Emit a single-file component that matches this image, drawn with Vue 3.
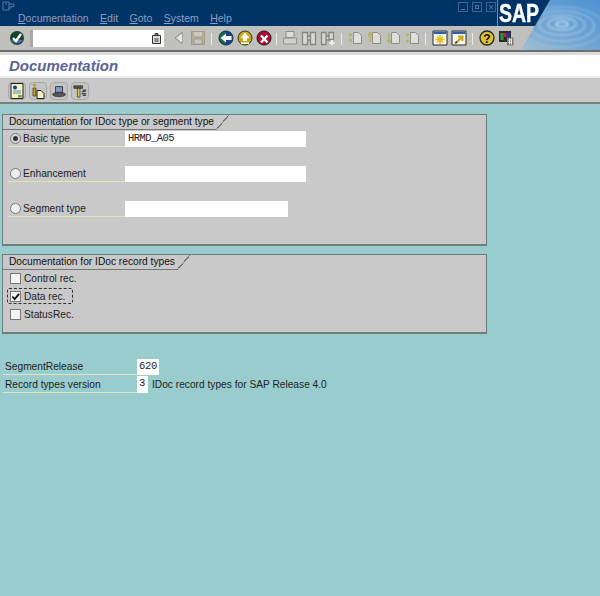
<template>
  <div class="screen">
    <!-- window title + menu -->
    <div class="menubar">
      <svg class="win-icon" width="13" height="11" viewBox="0 0 13 11"><path d="M1 1h6v8H1zM7 3h5v2.500H9V7H7M3 3h2" fill="none" stroke="#5a78a6" /></svg>
      <div class="win-btns">
        <span class="win-btn"><i class="mini-min"></i></span>
        <span class="win-btn"><i class="mini-max"></i></span>
        <span class="win-btn close">×</span>
      </div>
      <nav class="menu">
        <span v-for="m in menus" :key="m" class="menu-item"><u>{{ m[0] }}</u>{{ m.slice(1) }}</span>
      </nav>
    </div>

    <!-- system toolbar -->
    <div class="systoolbar">
      <button class="tb-btn first">
        <svg viewBox="0 0 16 16"><circle cx="8" cy="8" r="7" fill="#17432f" /><path d="M2 10a7 7 0 0 0 12 0z" fill="#4a6ea8" /><path d="M4 8l3 3 5-7" fill="none" stroke="#fff" stroke-width="2.400" /></svg>
      </button>
      <div class="cmd">
        <svg class="cmd-icon" viewBox="0 0 9 11"><path d="M.5 2.500h8v8h-8z" fill="#ddd" stroke="#333" /><path d="M3 .5h3v2H3zM2.500 6h4M2.500 8h4" fill="#888" stroke="#333" /></svg>
      </div>
      <button class="tb-btn">
        <svg viewBox="0 0 16 16"><path d="M11 2.500v11L4 8z" fill="#d4d4d0" stroke="#8c8c88" /><path d="M11 4v8L6 8z" fill="#e8e8e4" /></svg>
      </button>
      <button class="tb-btn">
        <svg viewBox="0 0 16 16"><path d="M1.500 1.500h13v13h-13z" fill="#b5ae93" stroke="#a09a80" /><path d="M4 2h8v4H4z" fill="#c8c8c4" /><path d="M4 9h8v5H4z" fill="#c8c8c4" stroke="#999" /></svg>
      </button>
      <i class="sep"></i>
      <button class="tb-btn">
        <svg viewBox="0 0 16 16"><circle cx="8" cy="8" r="7" fill="#0e6a4a" stroke="#102a3a" /><path d="M8 1a7 7 0 0 1 0 14z" fill="#1d3f8c" /><path d="M2.500 8L8 3.500V6h5.500v4H8v2.500z" fill="#fff" /></svg>
      </button>
      <button class="tb-btn">
        <svg viewBox="0 0 16 16"><circle cx="8" cy="8" r="7" fill="#c7a71d" stroke="#3a3410" /><path d="M8 2.500L12.500 8H10v3H6V8H3.500z" fill="#fff" /><path d="M4 12.500h8v1.500H4z" fill="#fff" /></svg>
      </button>
      <button class="tb-btn">
        <svg viewBox="0 0 16 16"><circle cx="8" cy="8" r="7" fill="#a80f2e" stroke="#301018" /><path d="M5 5.500l6.500 7M11.500 5.500L5 12.500" stroke="#fff" stroke-width="2.400" /></svg>
      </button>
      <i class="sep tight"></i>
      <button class="tb-btn">
        <svg viewBox="0 0 16 16"><path d="M4 1.500h8v6H4z" fill="#dcdcd8" stroke="#8f8f8b" /><path d="M1.500 8h13v6h-13z" fill="#cfcfcb" stroke="#8f8f8b" /></svg>
      </button>
      <button class="tb-btn">
        <svg viewBox="0 0 16 16"><path d="M1.500 2.500h5v12h-5zM9.500 2.500h5v12h-5zM6.500 6h3v4h-3z" fill="#d8d8d4" stroke="#858581" stroke-width="1.300" /></svg>
      </button>
      <button class="tb-btn">
        <svg viewBox="0 0 16 16"><path d="M1.500 2.500h4.500v12h-4.500zM9 2.500h4.500v7H9zM6 6h3v4H6z" fill="#d8d8d4" stroke="#858581" stroke-width="1.300" /><path d="M12 10v5.500M9.500 13h5" stroke="#f2f2ee" stroke-width="1.800" /></svg>
      </button>
      <i class="sep"></i>
      <button v-for="(arrow, i) in pageArrows" :key="i" class="tb-btn">
        <svg viewBox="0 0 16 16"><path d="M5.500 2.500h5l3 3v8h-8z" fill="#dedeDA" stroke="#8b8b87" /><path :d="arrow" fill="none" stroke="#b4b45c" stroke-width="1.500" /></svg>
      </button>
      <i class="sep mid"></i>
      <button class="tb-btn">
        <svg viewBox="0 0 16 16"><path d="M1 1h14v14H1z" fill="#f4f4ea" stroke="#2a2a2a" /><path d="M1.500 1.500h13V4h-13z" fill="#2f5fa8" /><path d="M8 5v9M3.500 9.500h9M5 6.500l6 6M11 6.500l-6 6" stroke="#e4c018" stroke-width="1.500" /></svg>
      </button>
      <button class="tb-btn">
        <svg viewBox="0 0 16 16"><path d="M1 1h14v14H1z" fill="#f4f4ea" stroke="#2a2a2a" /><path d="M1.500 1.500h13V4h-13z" fill="#2f5fa8" /><path d="M5 13l5-5M7 6.500h4.500V11" fill="none" stroke="#c8a414" stroke-width="2" /><path d="M3.500 14l3-1.500-1.500-1.500z" fill="#222" /></svg>
      </button>
      <i class="sep"></i>
      <button class="tb-btn">
        <svg viewBox="0 0 16 16"><circle cx="8" cy="8" r="7" fill="#dcc22a" stroke="#2a2a1a" stroke-width="1.300" /><text x="8" y="12.500" text-anchor="middle" class="help-mark">?</text></svg>
      </button>
      <button class="tb-btn">
        <svg viewBox="0 0 16 16"><path d="M1 1h12v11H1z" fill="#2c2c30" /><path d="M2.500 3h3v7h-3z" fill="#1f9a3c" /><path d="M5.500 3h3v4h-3z" fill="#d81e2a" /><path d="M8.500 3h3v4h-3z" fill="#2030b8" /><path d="M9 7.500h6.500v8H9z" fill="#77777a" /><path d="M10.500 10h3.500M10.500 12.500h3.500M11.500 8.500v6M13.500 8.500v6" stroke="#e8e8e8" /></svg>
      </button>
    </div>

    <!-- SAP logo and ripple sit over both bars -->
    <div class="brand">
      <svg class="ripple" width="103" height="50" viewBox="0 0 103 50">
        <defs>
          <linearGradient id="rippleBg" x1="0" y1="1" x2="1" y2="0">
            <stop offset="0" stop-color="#b8c8d4" />
            <stop offset="0.4" stop-color="#78a8d2" />
            <stop offset="1" stop-color="#4f92d2" />
          </linearGradient>
          <clipPath id="rippleClip"><path d="M53 0h50v50H24z" /></clipPath>
          <filter id="soft"><feGaussianBlur stdDeviation="0.8" /></filter>
        </defs>
        <g clip-path="url(#rippleClip)">
          <path d="M0 0h103v50H0z" fill="url(#rippleBg)" />
          <g fill="none" stroke="#a8d0ea" stroke-width="1.500" filter="url(#soft)">
            <ellipse cx="65" cy="24" rx="6" ry="2.500" stroke-width="2.200" />
            <ellipse cx="65" cy="24" rx="14" ry="6" />
            <ellipse cx="65" cy="25" rx="23" ry="10" opacity=".8" />
            <ellipse cx="65" cy="26" rx="32" ry="15" opacity=".65" />
            <ellipse cx="65" cy="27" rx="42" ry="20" opacity=".45" />
          </g>
        </g>
      </svg>
      <span class="sap-mark">SAP</span>
    </div>

    <div class="title-strip"><h1>Documentation</h1></div>

    <div class="apptoolbar">
      <button class="app-btn">
        <svg viewBox="0 0 14 16"><path d="M1 .5h12v15H1z" fill="#f3f0c8" stroke="#222" /><circle cx="5" cy="4.500" r="2" fill="#17408c" /><path d="M3 8h8M3 10h8" stroke="#5a8a9a" /><path d="M8 12h4v2.500H8z" fill="#7ca03c" /></svg>
      </button>
      <button class="app-btn">
        <svg viewBox="0 0 14 16"><circle cx="3.500" cy="2" r="1.600" fill="#c49a10" /><path d="M2 5h3v8H2z" fill="#c49a10" stroke="#222" stroke-width=".6" /><path d="M6 7.500h4l3 3v5H6z" fill="#f4f0c4" stroke="#222" /></svg>
      </button>
      <button class="app-btn">
        <svg viewBox="0 0 16 16"><path d="M4 3h8v8H4z" fill="#7a9ad0" stroke="#333" /><path d="M4 9h8v2.500H4z" fill="#d81e2a" /><ellipse cx="8" cy="12" rx="7.500" ry="2.500" fill="#55555a" stroke="#222" stroke-width=".7" /></svg>
      </button>
      <button class="app-btn">
        <svg viewBox="0 0 16 16"><path d="M1 2h10v3H1z" fill="#55555a" stroke="#222" stroke-width=".7" /><path d="M5 5h3v10H5z" fill="#d4c04c" stroke="#222" stroke-width=".7" /><path d="M11 7h4M10 11h5M10 9l5-1M11 13h4" stroke="#444" stroke-width="1.200" /></svg>
      </button>
    </div>

    <main class="content">
      <section class="group first-group">
        <header class="tab"><span>Documentation for IDoc type or segment type</span><i class="tab-slant"></i></header>
        <div class="radio-list">
          <div v-for="f in fields" :key="f.label" class="radio-row">
            <label class="radio-label">
              <span class="radio" :class="{ on: f.on }"></span>{{ f.label }}
            </label>
            <div class="input" :class="{ short: f.short }">{{ f.value }}</div>
          </div>
        </div>
      </section>

      <section class="group second-group">
        <header class="tab"><span>Documentation for IDoc record types</span><i class="tab-slant"></i></header>
        <div class="check-list">
          <div v-for="c in checks" :key="c.label" class="check-row" :class="{ focused: c.on }">
            <span class="check">
              <svg v-if="c.on" viewBox="0 0 10 10" width="9" height="9"><path d="M1.500 5l2.500 3 5-6" fill="none" stroke="#111" stroke-width="2" /></svg>
            </span>{{ c.label }}
          </div>
        </div>
      </section>

      <div class="release">
        <div class="release-row top">
          <span class="release-label">SegmentRelease</span>
          <span class="release-value wide">620</span>
        </div>
        <div class="release-row">
          <span class="release-label">Record types version</span>
          <span class="release-value">3</span>
          <span class="release-note">IDoc record types for SAP Release 4.0</span>
        </div>
      </div>
    </main>
  </div>
</template>

<script setup>
const menus = ['Documentation', 'Edit', 'Goto', 'System', 'Help']

const pageArrows = [
  'M1 5h3M2.500 3.500v3M1 10h3M2.500 8.500v3',
  'M3 12V3M1 5l2-2.500L5 5',
  'M3 3v9M1 10l2 2.500L5 10',
  'M1 5h3M2.500 3.500v3M1 11h3M2.500 9.500v3'
]

const fields = [
  { label: 'Basic type', value: 'HRMD_A05', on: true },
  { label: 'Enhancement', value: '' },
  { label: 'Segment type', value: '', short: true }
]

const checks = [
  { label: 'Control rec.' },
  { label: 'Data rec.', on: true },
  { label: 'StatusRec.' }
]
</script>

<style>
html,
body {
  margin: 0;
  background: #99cccc;
}
</style>

<style scoped>
.screen {
  position: relative;
  width: 600px;
  height: 596px;
  overflow: hidden;
  background: #99cccc;
  font-family: "Liberation Sans", Arial, sans-serif;
  font-size: 10.2px;
  color: #222;
}

.menubar {
  position: relative;
  height: 26px;
  background: #003366;
  box-sizing: border-box;
  padding: 12px 0 0 18px;
}
.win-icon {
  position: absolute;
  left: 2px;
  top: 1px;
}
.win-btns {
  position: absolute;
  left: 458px;
  top: 2px;
  display: flex;
  gap: 4px;
}
.win-btn {
  position: relative;
  width: 8px;
  height: 8px;
  border: 1px solid #41618f;
  color: #56769f;
  font-size: 11px;
  line-height: 8px;
  text-align: center;
}
.mini-min {
  position: absolute;
  left: 2px;
  bottom: 1px;
  width: 4px;
  height: 1px;
  background: #56769f;
}
.mini-max {
  position: absolute;
  left: 2px;
  top: 2px;
  width: 4px;
  height: 4px;
  border: 1px solid #56769f;
  box-sizing: border-box;
}
.menu {
  display: flex;
  gap: 11.4px;
}
.menu-item {
  font-size: 10.5px;
  line-height: 13px;
  color: #8d9fc4;
}

.systoolbar {
  height: 26px;
  box-sizing: border-box;
  background: #c0c0bc;
  border-bottom: 2px solid #6f6f6f;
  padding: 2px 0 0 7px;
  display: flex;
  align-items: flex-start;
}
.tb-btn {
  width: 19px;
  height: 20px;
  padding: 2px 1px;
  flex: none;
  border: 0;
  background: none;
  display: flex;
  align-items: center;
  justify-content: center;
}
.tb-btn svg {
  width: 16px;
  height: 16px;
  display: block;
}
.cmd {
  position: relative;
  width: 131px;
  height: 17px;
  margin: 2px 5px 0 7px;
  flex: none;
  background: #fff;
  box-shadow: -3px 0 0 #a8a8a4;
}
.cmd-icon {
  position: absolute;
  right: 3px;
  top: 3px;
  width: 9px;
  height: 11px;
}
.sep {
  width: 1px;
  height: 12px;
  margin: 5px 4px 0;
  flex: none;
  background: #e8e8e4;
}
.sep.tight {
  margin-left: 3px;
  margin-right: 3px;
}
.sep.mid {
  margin-left: 3px;
}
.help-mark {
  font-family: "Liberation Sans", Arial, sans-serif;
  font-size: 12px;
  font-weight: 700;
  fill: #111;
}

.brand {
  position: absolute;
  top: 0;
  right: 0;
  width: 103px;
  height: 50px;
}
.ripple {
  position: absolute;
  left: 0;
  top: 0;
}
.sap-mark {
  position: absolute;
  left: 2px;
  top: 0;
  transform: scaleX(0.78);
  transform-origin: left top;
  color: #fff;
  font-size: 25px;
  line-height: 27px;
  font-weight: 700;
  -webkit-text-stroke: 0.4px #fff;
}
.brand::before {
  content: "";
  position: absolute;
  left: 0;
  top: 0;
  width: 1px;
  height: 26px;
  background: #6e86a8;
}

.title-strip {
  height: 26px;
  box-sizing: border-box;
  background: #fff;
  padding-left: 9px;
  border-top: 3px solid #dcdcdc;
  border-bottom: 2px solid #eeeeee;
}
h1 {
  margin: 0;
  font-size: 15px;
  line-height: 21px;
  font-style: italic;
  font-weight: 700;
  color: #5a6496;
}

.apptoolbar {
  height: 26px;
  box-sizing: border-box;
  background: #c9c9c9;
  border-bottom: 2px solid #7d7d7d;
  padding: 4px 0 0 8px;
  display: flex;
  gap: 3px;
}
.app-btn {
  width: 18px;
  height: 18px;
  padding: 1px;
  flex: none;
  border: 1px solid #a8a8a8;
  border-radius: 4px;
  background: #c4c4c4;
  display: flex;
  align-items: center;
  justify-content: center;
}
.app-btn svg {
  width: 14px;
  height: 16px;
}

.content {
  padding: 10px 0 0 2px;
}
.group {
  position: relative;
  width: 485px;
  box-sizing: border-box;
  background: #c9c9c9;
  border: 1px solid #6e7e7e;
  border-bottom-width: 2px;
}
.first-group {
  height: 132px;
}
.second-group {
  height: 80px;
  margin-top: 8px;
}
.tab {
  position: relative;
  width: max-content;
  height: 15px;
  box-sizing: border-box;
  padding: 0 2px 0 6px;
  border-bottom: 1px solid #777;
  font-size: 10.2px;
  line-height: 14px;
  color: #111;
}
.tab-slant {
  position: absolute;
  left: 100%;
  top: 0;
  width: 13px;
  height: 15px;
  background: linear-gradient(to top left, transparent 47%, #777 47%, #777 53%, #c9c9c9 53%);
}

.radio-list {
  display: flex;
  flex-direction: column;
  gap: 19.2px;
  padding: 1px 0 0 5px;
}
.radio-row {
  display: flex;
}
.radio-label {
  display: flex;
  align-items: center;
  width: 117px;
  height: 16px;
  box-sizing: border-box;
  border-bottom: 1px solid #e4e2b8;
  font-size: 10.2px;
}
.radio {
  position: relative;
  width: 11px;
  height: 11px;
  box-sizing: border-box;
  margin: 0 2px;
  border: 1px solid #777;
  border-radius: 50%;
  background: #eee;
}
.radio.on {
  background: #d8d8d8;
}
.radio.on::after {
  content: "";
  position: absolute;
  left: 2px;
  top: 2px;
  width: 5px;
  height: 5px;
  border-radius: 50%;
  background: #333;
}
.input {
  width: 181px;
  height: 16px;
  box-sizing: border-box;
  padding-left: 3px;
  background: #fff;
  font-family: "Liberation Mono", monospace;
  font-size: 10.5px;
  letter-spacing: -0.55px;
  line-height: 15px;
}
.input.short {
  width: 163px;
}

.check-list {
  display: flex;
  flex-direction: column;
  gap: 2px;
  padding: 0 0 0 4px;
}
.check-row {
  display: flex;
  align-items: center;
  width: max-content;
  height: 16px;
  box-sizing: border-box;
  padding: 0 7px 0 2px;
  border: 1px solid transparent;
  font-size: 10.2px;
}
.check-row.focused {
  border: 1px dashed #333;
  border-radius: 2px;
}
.check {
  display: flex;
  align-items: center;
  justify-content: center;
  width: 11px;
  height: 11px;
  box-sizing: border-box;
  margin-right: 3px;
  border: 1px solid #777;
  background: #f4f4f4;
}

.release {
  margin-top: 25px;
}
.release-row {
  display: flex;
  align-items: flex-end;
  height: 17px;
}
.release-row.top {
  height: 16px;
  margin-bottom: 1px;
}
.release-label {
  width: 134px;
  height: 16px;
  margin-left: 1px;
  padding: 1px 0 0 2px;
  box-sizing: border-box;
  border-bottom: 1px solid #e4e2b8;
  font-size: 10.2px;
  line-height: 14px;
}
.release-value {
  width: 11px;
  height: 100%;
  box-sizing: border-box;
  padding-left: 2px;
  background: #fff;
  font-family: "Liberation Mono", monospace;
  font-size: 10.5px;
  letter-spacing: -0.3px;
  line-height: 15px;
}
.release-value.wide {
  width: 22px;
}
.release-note {
  margin: 0 0 1px 4px;
  font-size: 10.2px;
  line-height: 15px;
}
</style>
